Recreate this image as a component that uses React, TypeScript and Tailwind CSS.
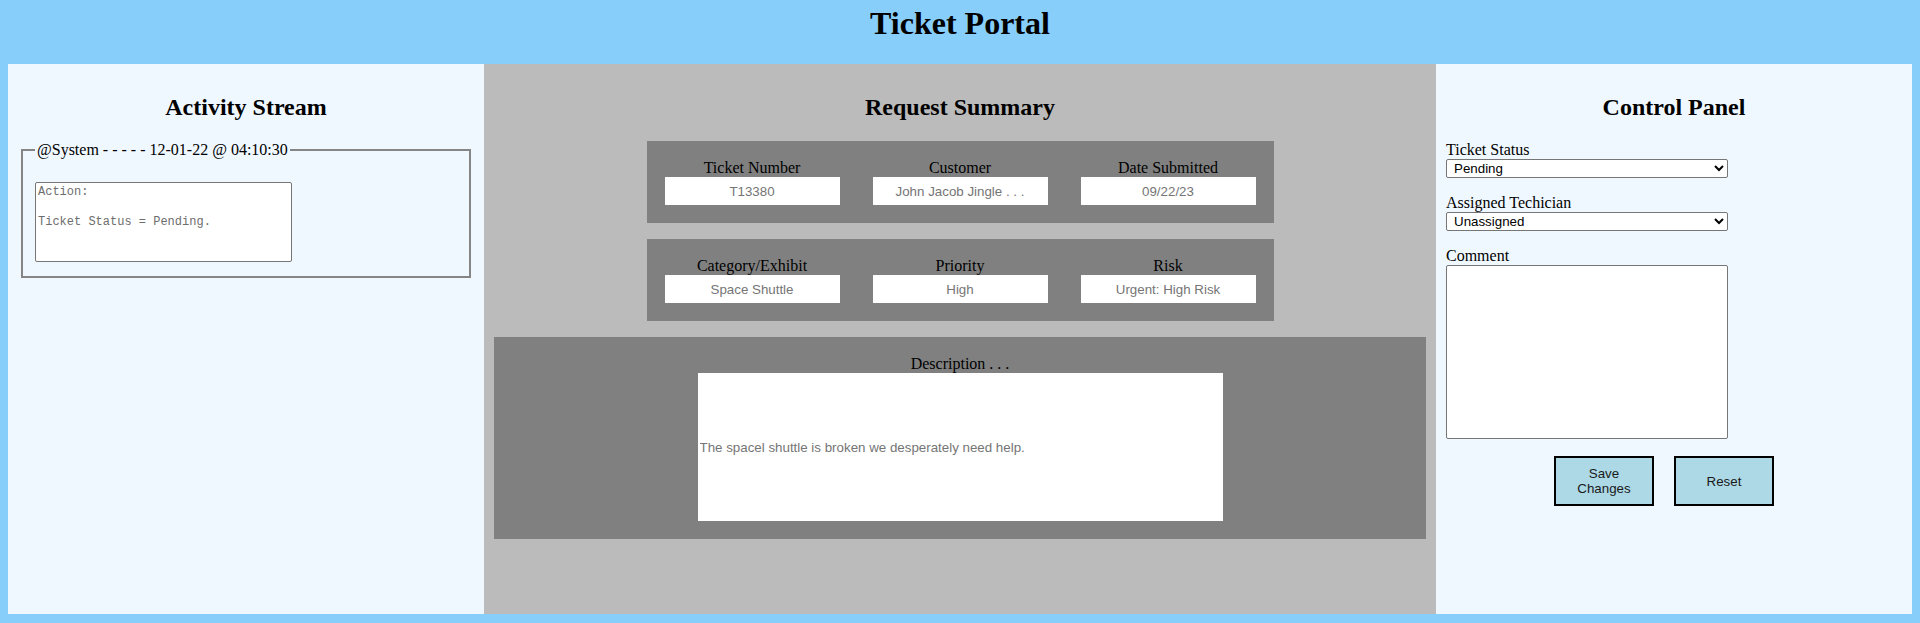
import React from "react";

const summaryRows = [
  [
    { label: "Ticket Number", value: "T13380" },
    { label: "Customer", value: "John Jacob Jingle . . ." },
    { label: "Date Submitted", value: "09/22/23" }
  ],
  [
    { label: "Category/Exhibit", value: "Space Shuttle" },
    { label: "Priority", value: "High" },
    { label: "Risk", value: "Urgent: High Risk" }
  ]
];

function PanelTitle({ children }: { children: React.ReactNode }) {
  return <h2 className="mb-[20px] text-center text-[24px] font-bold leading-[normal]">{children}</h2>;
}

function ActivityStream() {
  return (
    <section className="bg-[#f0f8ff] px-[10px] pt-[30px]">
      <PanelTitle>Activity Stream</PanelTitle>
      <fieldset className="mx-[3px] border-2 border-[#858585] px-[12px] pt-[6px] pb-[14px]">
        <legend className="px-[2px] text-[16px] leading-[normal]">@System - - - - - 12-01-22 @ 04:10:30</legend>
        <textarea
          readOnly
          className="mt-[17px] block h-[80px] w-[257px] resize-none rounded-[2px] border border-[#767676] bg-white px-[2px] py-[2px] font-['Liberation_Mono',monospace] text-[12px] leading-[15px] text-[#6d6d6d]"
          value={"Action:\n\nTicket Status = Pending."}
        />
      </fieldset>
    </section>
  );
}

function RequestSummary() {
  return (
    <section className="flex flex-col items-center bg-[#bbbbbb] px-[10px] pt-[30px]">
      <PanelTitle>Request Summary</PanelTitle>
      <div className="flex flex-col gap-[16px]">
        {summaryRows.map((row, index) => (
          <div key={index} className="flex gap-[33px] bg-[#808080] p-[18px]">
            {row.map((field) => (
              <div key={field.label} className="flex w-[175px] flex-col items-center">
                <span className="text-[16px] leading-[normal]">{field.label}</span>
                <input
                  readOnly
                  value={field.value}
                  className="h-[28px] w-[175px] bg-white text-center font-['Liberation_Sans',Arial,sans-serif] text-[13.33px] text-[#757575] outline-none"
                />
              </div>
            ))}
          </div>
        ))}
      </div>
      <div className="mt-[16px] flex w-full flex-col items-center bg-[#808080] p-[18px]">
        <span className="text-[16px] leading-[normal]">Description . . .</span>
        <input
          readOnly
          value="The spacel shuttle is broken we desperately need help."
          className="h-[148px] w-[525px] bg-white px-[2px] font-['Liberation_Sans',Arial,sans-serif] text-[13.33px] text-[#757575] outline-none"
        />
      </div>
    </section>
  );
}

function ControlPanel() {
  const selectClass =
    "h-[19px] w-[282px] rounded-[2px] border border-[#767676] bg-white pl-[3px] font-['Liberation_Sans',Arial,sans-serif] text-[13.33px] text-black";

  return (
    <section className="bg-[#f0f8ff] px-[10px] pt-[30px]">
      <PanelTitle>Control Panel</PanelTitle>
      <div className="flex flex-col">
        <label className="text-[16px] leading-[normal]">Ticket Status</label>
        <select className={selectClass} defaultValue="Pending">
          <option>Pending</option>
          <option>In Progress</option>
          <option>Resolved</option>
        </select>
        <label className="mt-[16px] text-[16px] leading-[normal]">Assigned Techician</label>
        <select className={selectClass} defaultValue="Unassigned">
          <option>Unassigned</option>
        </select>
        <label className="mt-[16px] text-[16px] leading-[normal]">Comment</label>
        <textarea className="h-[174px] w-[282px] resize-none rounded-[2px] border border-[#767676] bg-white" />
      </div>
      <div className="mt-[17px] flex justify-center gap-[20px] pr-[20px]">
        <button
          type="button"
          className="h-[50px] w-[100px] border-2 border-black bg-[#add8e6] font-['Liberation_Sans',Arial,sans-serif] text-[13.33px] leading-[15px] text-[#1a1a1a]"
        >
          Save
          <br />
          Changes
        </button>
        <button
          type="button"
          className="h-[50px] w-[100px] border-2 border-black bg-[#add8e6] font-['Liberation_Sans',Arial,sans-serif] text-[13.33px] leading-[15px] text-[#1a1a1a]"
        >
          Reset
        </button>
      </div>
    </section>
  );
}

export default function App() {
  return (
    <div className="min-h-[623px] bg-[#87cefa] font-['Liberation_Serif',serif] text-black">
      <header className="h-16 pt-[5px]">
        <h1 className="text-center text-[32px] font-bold leading-[normal]">Ticket Portal</h1>
      </header>
      <main className="mx-2 grid h-[550px] grid-cols-[1fr_2fr_1fr]">
        <ActivityStream />
        <RequestSummary />
        <ControlPanel />
      </main>
    </div>
  );
}
